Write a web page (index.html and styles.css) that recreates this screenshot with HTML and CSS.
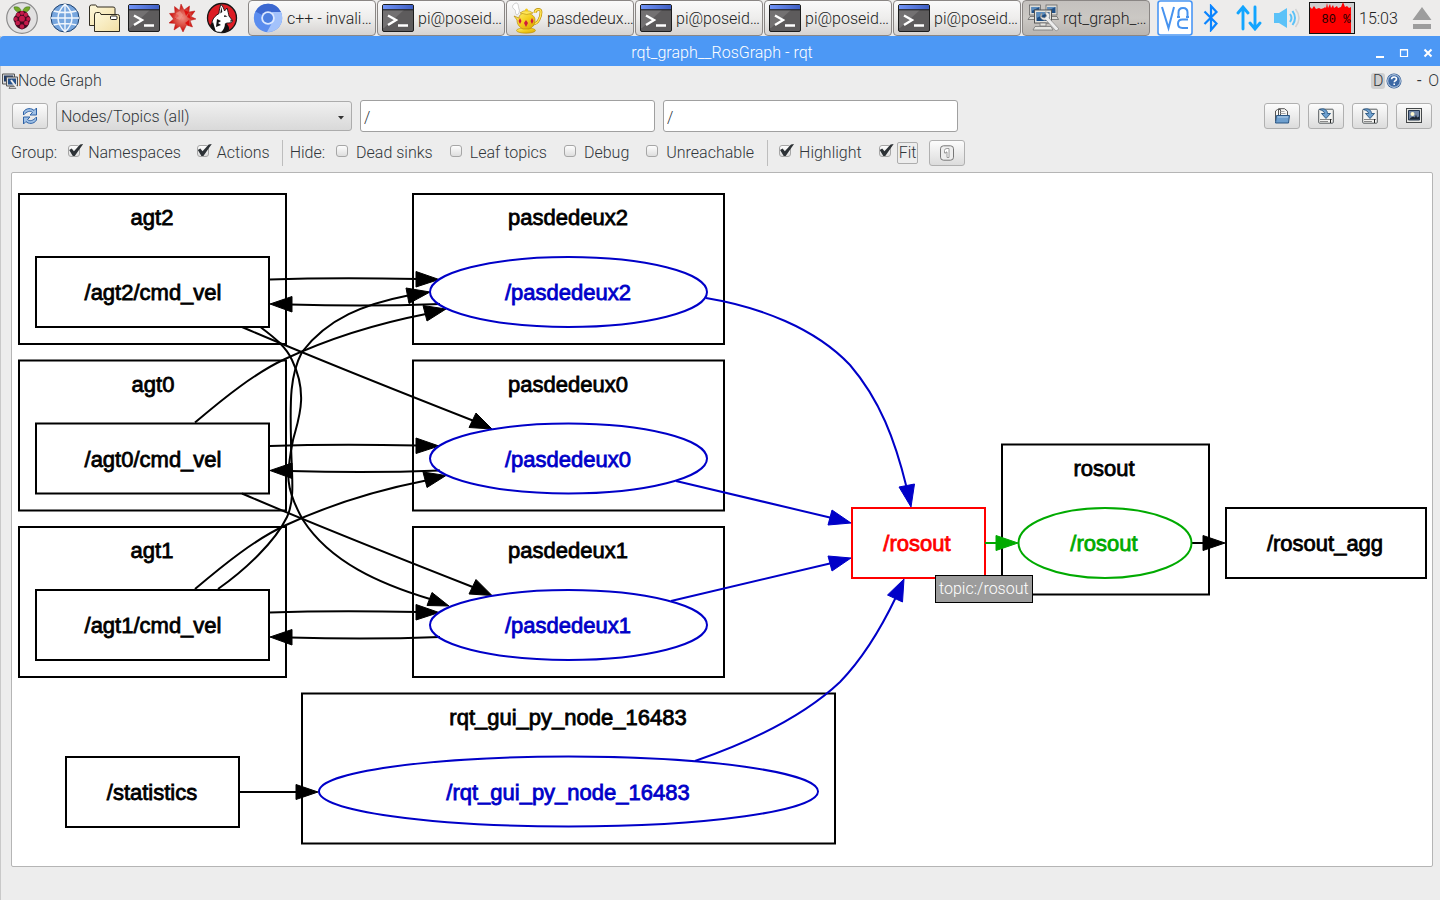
FILE: index.html
```html
<!DOCTYPE html>
<html lang="en">
<head>
<meta charset="utf-8">
<title>rqt_graph__RosGraph - rqt</title>
<link rel="stylesheet" href="styles.css">
</head>
<body>
<svg class="defs" aria-hidden="true">
  <defs>
    <linearGradient id="termBar" x1="0" x2="1" y1="0" y2="0"><stop offset="0" stop-color="#6f92f5"/><stop offset="1" stop-color="#3f5fc4"/></linearGradient>
    <linearGradient id="folderFill" x1="0" x2="1" y1="0" y2="1"><stop offset="0" stop-color="#fdf8dc"/><stop offset="1" stop-color="#f3dfa4"/></linearGradient>
    <linearGradient id="gold" x1="0" x2="1" y1="0" y2="1"><stop offset="0" stop-color="#fff27a"/><stop offset=".5" stop-color="#f5cf1e"/><stop offset="1" stop-color="#d9a400"/></linearGradient>
    <radialGradient id="starFill"><stop offset="0" stop-color="#ee8d80"/><stop offset=".6" stop-color="#d8453b"/><stop offset="1" stop-color="#c00"/></radialGradient>
    <symbol id="terminal" viewBox="0 0 32 28">
      <rect x=".5" y=".5" width="31" height="27" rx="1.5" fill="#5d5b5c" stroke="#1c1c1c"/>
      <path d="M1 6h21L2 24H1z" fill="#737172"/>
      <rect x="1" y="1" width="30" height="4.5" fill="url(#termBar)"/>
      <path d="M1 5.8h30" stroke="#1c1c1c"/>
      <path d="M6 11.500l8 4.500-8 5M16 21.500h10" fill="none" stroke="#fff" stroke-width="2.400"/>
    </symbol>
    <symbol id="monitors" viewBox="0 0 32 28">
      <g stroke="#666" stroke-width=".8" fill="#dcdcd8">
        <rect x="2.500" y="1" width="11" height="10"/><rect x="19" y="1" width="11" height="10"/>
        <path d="M3 12.500h6v3H1zM24 12.500h6l1.500 3H24z"/>
      </g>
      <path d="M4.500 3h8v6h-8zM20.500 3h8v6h-8z" fill="#1f4f86"/><path d="M4.500 3h8l-8 4zM20.500 3h8l-8 4z" fill="#5c8dbe"/>
      <rect x="7.500" y="6" width="17" height="13" fill="#e4e4df" stroke="#555"/>
      <path d="M9.500 8h13v9h-13z" fill="#1c4b80"/><path d="M9.500 8h13l-13 6z" fill="#5c8dbe"/>
      <path d="M13 19h6v3h-6zM8 22.500h16l2 3.500H6z" fill="#e6e6e2" stroke="#777" stroke-width=".8"/>
      <path d="M15 9c-4 4 0 8 4 7l10 11 3-2-10-11c2-4-1-6-4-6l1.500 4-2 2-3-1z" fill="#ececec" stroke="#888" stroke-width=".7"/>
    </symbol>
    <symbol id="save" viewBox="0 0 16 16">
      <rect x=".7" y="1.200" width="14.600" height="14" rx="1" fill="#f3f3f1" stroke="#555b5e"/>
      <path d="M2 11.500h12M2 13.500h8" stroke="#888"/><path d="M12.500 11v4" stroke="#222"/>
      <path d="M1.500 1.500c5-2 8 1 8 4h3L8 10.500 3.500 5.500h3c0-2-2-3-5-4z" fill="#6ea0cf" stroke="#28537e" stroke-width=".9"/>
    </symbol>
  </defs>
</svg>

<header class="taskbar">
  <nav class="launchers" aria-label="Launchers">
    <button class="launch" aria-label="Menu"><svg width="32" height="32" viewBox="0 0 32 32">
      <circle cx="16" cy="16" r="15.300" fill="#e2e1e1" stroke="#8c8c8c" stroke-width="1.200"/>
      <path d="M15.500 10C11 11 8 8 8 5c4-1 7 1 7.500 5zM16.500 10c4.500 1 7.500-2 7.500-5-4-1-7 1-7.500 5z" fill="#75a928" stroke="#356b16" stroke-width=".5"/>
      <path d="M16 9c-4 0-6 2-6.500 4.500C7 15 7 18.500 8.500 20c.5 4 3.500 6.500 7.500 7.500 4-1 7-3.500 7.500-7.500 1.500-1.500 1.500-5-1-6.500C22 11 20 9 16 9z" fill="#450a20"/>
      <g fill="#c51a4a"><circle cx="16" cy="11" r="2"/><circle cx="12.200" cy="12.800" r="2.100"/><circle cx="19.800" cy="12.800" r="2.100"/><circle cx="16" cy="16.700" r="2.900"/><circle cx="9.800" cy="17" r="1.900"/><circle cx="22.200" cy="17" r="1.900"/><circle cx="11.700" cy="21" r="2.300"/><circle cx="20.300" cy="21" r="2.300"/><circle cx="16" cy="24.500" r="2.200"/></g>
    </svg></button>
    <button class="launch" aria-label="Web browser"><svg width="30" height="30" viewBox="0 0 30 30">
      <circle cx="15" cy="15" r="14" fill="#77a6de" stroke="#1c3f6c"/>
      <path d="M15 1v28M1 15h28M3.500 8q11.500 3 23 0M3.500 22q11.500-3 23 0M15 1q-14 14 0 28q14-14 0-28" fill="none" stroke="#f1f6fc" stroke-width="1.400"/>
    </svg></button>
    <button class="launch" aria-label="File manager"><svg width="34" height="30" viewBox="0 0 34 30">
      <g fill="url(#folderFill)" stroke="#302c20"><path d="M2.500 22.500V4q0-2 2-2h4q1 0 1.500 2h16q2 0 2 1.500v17z"/><path d="M7.500 28.500V12q0-2.500 2-2.500h3q1 0 1.500 2h16.500q2 0 2 2v15z"/></g>
      <rect x="23.500" y="13" width="6.500" height="3.500" rx="1" fill="#fff" stroke="#222"/>
    </svg></button>
    <button class="launch" aria-label="Terminal"><svg width="32" height="28"><use href="#terminal"/></svg></button>
    <button class="launch" aria-label="Mathematica"><svg width="30" height="30" viewBox="0 0 30 30">
      <path d="M14 1l3 6 5.500-4-.5 6 6-1-4 5.500 5 2.500-6 1.500 2.500 6.500-6-2-3.500 7-3-6-6 4 1.500-6.500L2 20l4.500-4-4-5.500L8 10 7.500 3.500l5 4z" fill="url(#starFill)" stroke="#b91d18" stroke-width=".5"/>
      <path d="M17 7l5 2-3 4zM22 10l2 6-4-2zM22 17v6l-4-3zM9 10l-1 6 4-3z" fill="#d00" opacity=".8"/><path d="M9 10l4-2 3 4-3 5-5-2z" fill="#f0a296" opacity=".55"/>
    </svg></button>
    <button class="launch" aria-label="Wolfram"><svg width="32" height="32" viewBox="0 0 32 32">
      <circle cx="16" cy="16" r="14.500" fill="#dc1c24" stroke="#161616" stroke-width="1.300"/>
      <path d="M7 28C4 20 7 15 13 11.500 13 8 14 5 15 2.500c2 2 3 4.500 3.500 6.500L21 6c1 3 1.500 6 2 8l3.500 4.500c0 2.500-3 2.500-6 2.500 1 4-1 6-3 9-4 1-8 0-10.500-2z" fill="#fff" stroke="#111" stroke-width=".9"/>
      <path d="M7 20l-3 3q2 5 6 7zM19 21q5 3 4 7-3 2.500-8 2.500 4-4 4-9.500zM15.300 5l1 5-2 1.500zM18.500 13l3 1.500-3.500.5zM24.500 17.500l2 1.200-2 1.300zM11 17l4 2-3 2 3 2-5 2z" fill="#111"/>
    </svg></button>
  </nav>
  <nav class="tasks" aria-label="Open windows">
    <button class="task"><svg width="30" height="30" viewBox="0 0 30 30"><circle cx="15" cy="15" r="14.200" fill="#5b8def"/><path d="M15 15L2.500 8.500A14.200 14.200 0 0 1 28 9H15z" fill="#3c68d0"/><path d="M28 9a14.200 14.200 0 0 1-14 20l6-11-1-9z" fill="#a3c2fb"/><circle cx="15" cy="15" r="6.800" fill="#dce8ff"/><circle cx="15" cy="15" r="5" fill="#4d7fe0"/></svg><span>c++ - invali…</span></button>
    <button class="task"><svg width="32" height="28"><use href="#terminal"/></svg><span>pi@poseid…</span></button>
    <button class="task"><svg width="32" height="32" viewBox="0 0 32 32">
      <path d="M6 13C3 11 6 9 3 7S2 2 5 1c3 0 2 4 3 6s0 5-2 6z" fill="#fff" stroke="#bbb" stroke-width=".7"/>
      <path d="M24 11c0-4 6-5 6-1 0 5-3 12-8 12" fill="none" stroke="#b98c08" stroke-width="2.800"/><path d="M24 11c0-4 6-5 6-1 0 5-3 12-8 12" fill="none" stroke="#ffe355" stroke-width="1.500"/>
      <ellipse cx="15" cy="28.500" rx="9.500" ry="2.700" fill="url(#gold)" stroke="#b68a09" stroke-width=".6"/>
      <path d="M3 14l5 2c0-4 4-5 7-5s9 2 9 7c0 5-3 8-6 9h-6c-4-2-6-5-6-9z" fill="url(#gold)" stroke="#b68a09" stroke-width=".7"/>
      <path d="M9 11q6-5 13 0-6 3-13 0z" fill="#ffe556" stroke="#b68a09" stroke-width=".6"/><circle cx="15.500" cy="8" r="1.500" fill="#f3c919"/>
      <path d="M9 16l1.500 3L9 22l-1.500-3zM15 18l2 3-2 4-2-4zM21 16l1.500 3-1.500 3-1.500-3z" fill="#d0193c"/>
    </svg><span>pasdedeux…</span></button>
    <button class="task"><svg width="32" height="28"><use href="#terminal"/></svg><span>pi@poseid…</span></button>
    <button class="task"><svg width="32" height="28"><use href="#terminal"/></svg><span>pi@poseid…</span></button>
    <button class="task"><svg width="32" height="28"><use href="#terminal"/></svg><span>pi@poseid…</span></button>
    <button class="task active"><svg width="32" height="28"><use href="#monitors"/></svg><span>rqt_graph_…</span></button>
  </nav>
  <div class="tray">
    <svg width="36" height="36" viewBox="0 0 36 36"><rect x="1" y="1" width="34" height="34" rx="2.500" fill="#fff" stroke="#4a97f5" stroke-width="1.600"/><path d="M5 7l6.500 21L17 7M21.500 17v-4.500q0-4.500 4.500-4.500t4.500 4.500V17M31 19.500h-5.500q-4.500 0-4.500 4.200t4.500 4.200H31M20 17h3M29 17h3" fill="none" stroke="#4793ef" stroke-width="2"/></svg>
    <svg width="16" height="28" viewBox="0 0 16 28"><path d="M1.500 7.500l12 12L8 26V2l5.500 6-12 12" fill="none" stroke="#0a84ff" stroke-width="2.200"/></svg>
    <svg width="26" height="26" viewBox="0 0 26 26"><path d="M7 24V3M2 8l5-6 5 6M19 2v21M14 18l5 6 5-6" fill="none" stroke="#12a5ff" stroke-width="2.900" stroke-linecap="round"/></svg>
    <svg width="28" height="22" viewBox="0 0 28 22"><path d="M1 6h5l8-5v20l-8-5H1z" fill="#5bc2f8"/><path d="M17 7q3 4 0 8M19.500 4q5 7 0 14" fill="none" stroke="#5bc2f8" stroke-width="2"/><path d="M22.500 2q7 9 0 18" fill="none" stroke="#d1d3d4" stroke-width="1.500"/></svg>
    <svg class="cpu" width="46" height="32" viewBox="0 0 46 32"><rect x=".5" y=".5" width="45" height="31" fill="#cfcfcf" stroke="#111"/><path d="M1 31V5l2 2 2-3 2 3 3-1 2 1 3-1 1-1 1 1 1-5 1 5 2-4 1 4 2-3 1 3 3-2 1 2 3-1 2-5 2 5 2-1 2 2 2-1v26z" fill="#f00"/><text x="27" y="21">80 %</text></svg>
    <time>15:03</time>
    <svg width="20" height="22" viewBox="0 0 20 22"><path d="M10 0l9.500 13H.5zM1 17h18v5H1z" fill="#9d9d9d"/></svg>
  </div>
</header>

<main class="window">
  <div class="titlebar">
    <h1>rqt_graph__RosGraph - rqt</h1>
    <div class="wincontrols">
      <button aria-label="Minimize"><svg width="10" height="10" viewBox="0 0 10 10"><path d="M1 9h8" stroke="#fff" stroke-width="2"/></svg></button>
      <button aria-label="Maximize"><svg width="10" height="10" viewBox="0 0 10 10"><path d="M1.500 1.500h7v7h-7zM1 2h8" fill="none" stroke="#fff" stroke-width="1.200"/></svg></button>
      <button aria-label="Close"><svg width="10" height="10" viewBox="0 0 10 10"><path d="M1.500 1.500l7 7M8.500 1.500l-7 7" stroke="#fff" stroke-width="2"/></svg></button>
    </div>
  </div>

  <div class="dockbar">
    <svg width="16" height="16" viewBox="0 0 16 16"><path d="M.5 1h12v10H.5z" fill="#ddd" stroke="#555"/><path d="M2 2.500h9v6H2z" fill="#213b67"/><path d="M4.500 4h11v9h-11z" fill="#ddd" stroke="#555"/><path d="M6 5.500h8v6H6z" fill="#26518a"/><path d="M8 13.500h5l1 2H7z" fill="#ccc" stroke="#555" stroke-width=".7"/><path d="M9 7l6 8" stroke="#eee" stroke-width="2"/></svg>
    <h2>Node Graph</h2>
    <div class="dockactions">
      <button class="dockd">D</button>
      <button aria-label="Help"><svg width="16" height="16" viewBox="0 0 16 16"><circle cx="8" cy="8" r="7.500" fill="#2f5a94"/><circle cx="8" cy="8" r="6.300" fill="#3b68a5" stroke="#dbe6f4" stroke-width=".9"/><path d="M5.600 6.300q0-2.300 2.500-2.300 2.400 0 2.400 2 0 1.200-1.200 1.800-1 .5-1 1.400M8.200 10.500v1.600" fill="none" stroke="#fff" stroke-width="1.600"/></svg></button>
      <button class="dash">-</button>
      <button>O</button>
    </div>
  </div>

  <div class="filters">
    <button class="tool" aria-label="Refresh"><svg width="16" height="16" viewBox="0 0 16 16"><path d="M1.500 7V4C4-.5 10 0 12 2.500L14.500 0v7H8l2.500-2.500C8.500 2.500 5 3 1.500 7zM14.500 9v3c-2.500 4.500-8.500 4-10.500 1.500L1.500 16V9H8l-2.500 2.500c2 2 5.500 1.500 9-2.500z" fill="#9fc0e5" stroke="#2e62a6"/></svg></button>
    <div class="combo">
      <select aria-label="Graph type"><option>Nodes/Topics (all)</option><option>Nodes/Topics (active)</option><option>Nodes only</option></select>
      <svg width="6" height="4" viewBox="0 0 6 4"><path d="M0 0h6L3 3.500z" fill="#333"/></svg>
    </div>
    <input class="field" type="text" value="/" aria-label="Node filter">
    <input class="field" type="text" value="/" aria-label="Topic filter">
    <div class="fileactions">
      <button class="tool" aria-label="Load"><svg width="16" height="16" viewBox="0 0 16 16"><path d="M1.500 13V3l2-1.500h3V8M4.500 8V.7h6l3 2.500V8" fill="#f7f7f5" stroke="#555"/><path d="M6.500 3.500h4M6.500 5.500h5" stroke="#aaa"/><path d="M2.500 7.500h13l-1 7.500h-13z" fill="#6e9fce" stroke="#295583"/><path d="M3.500 9h10.500" stroke="#b6d0e9"/></svg></button>
      <button class="tool" aria-label="Save DOT"><svg width="16" height="16"><use href="#save"/></svg></button>
      <button class="tool" aria-label="Save SVG"><svg width="16" height="16"><use href="#save"/></svg></button>
      <button class="tool" aria-label="Save image"><svg width="16" height="16" viewBox="0 0 16 16"><rect x=".5" y=".5" width="15" height="14" fill="#e8e8e4" stroke="#45484a"/><path d="M2.500 2.500h11v9.500h-11z" fill="#7286a6" stroke="#25364f"/><circle cx="6.500" cy="6" r="2" fill="#fff7cf"/><path d="M3 11.500q3-4 6-2l1-3 1 3 2-1v3z" fill="#1c2634"/></svg></button>
    </div>
  </div>

  <div class="options">
    <span class="grouplabel">Group:</span>
    <label class="check"><input type="checkbox" checked><span>Namespaces</span></label>
    <label class="check"><input type="checkbox" checked><span>Actions</span></label>
    <i class="sep"></i>
    <span class="grouplabel">Hide:</span>
    <label class="check"><input type="checkbox"><span>Dead sinks</span></label>
    <label class="check"><input type="checkbox"><span>Leaf topics</span></label>
    <label class="check"><input type="checkbox"><span>Debug</span></label>
    <label class="check"><input type="checkbox"><span>Unreachable</span></label>
    <i class="sep"></i>
    <label class="check"><input type="checkbox" checked><span>Highlight</span></label>
    <label class="check focus"><input type="checkbox" checked><span>Fit</span></label>
    <button class="tool" aria-label="Fit in view"><svg width="16" height="16" viewBox="0 0 16 16"><rect x="1.500" y=".8" width="13" height="14.400" rx="3" fill="#eee" stroke="#777"/><path d="M5.500 5.500q0-2 2.500-2h2v9H8V7H7v1H5.500z" fill="#fff" stroke="#888" stroke-width=".8"/></svg></button>
  </div>

  <section class="canvas" aria-label="Graph">
    <svg class="graph" viewBox="12 173 1420 693">
      <defs>
        <g id="pair"><path d="M270 279.500C315 278 365 278 418 279"/><path class="head" d="M439 279.500L416 271.500V287z"/><path d="M440 304C390 306 340 306 290 304.500"/><path class="head" d="M270 304L292 296.500V312z"/></g>
        <g id="down"><path d="M242 327C300 352 400 392 474 421"/><path class="head" d="M492 429L469 427.500 476 413z"/></g>
        <g id="up"><path d="M195 422.500C225 397 255 373 285 359C330 338 380 323 426 314"/><path class="head" d="M446 309L427 321 423 305.500z"/></g>
      </defs>
      <g class="shape">
        <rect x="19" y="194" width="267" height="150"/><rect x="19" y="360.500" width="267" height="150"/><rect x="19" y="527" width="267" height="150"/>
        <rect x="413" y="194" width="311" height="150"/><rect x="413" y="360.500" width="311" height="150"/><rect x="413" y="527" width="311" height="150"/>
        <rect x="302" y="693.500" width="533" height="150"/><rect x="1002" y="444.500" width="207" height="150"/>
        <rect x="36" y="257" width="233" height="70"/><rect x="36" y="423.500" width="233" height="70"/><rect x="36" y="590" width="233" height="70"/>
        <rect x="66" y="757" width="173" height="70"/><rect x="1226" y="508" width="200" height="70"/><rect class="red" x="852" y="508" width="133" height="70"/>
      </g>
      <g class="edge">
        <use href="#pair"/><use href="#pair" y="166.500"/><use href="#pair" y="333"/>
        <use href="#down"/><use href="#down" y="166.500"/>
        <use href="#up"/><use href="#up" y="166.500"/>
        <path d="M261 327.500C275 338 286 347 292 360C309 395 298 420 293 440C286 475 285 488 303 520C330 562 380 584 430 599"/><path class="head" d="M449 606L427 605.500 432 592.500z"/>
        <path d="M218 589C245 570 275 542 287 517C296 498 291 470 291 440C290 400 290 375 302 352C328 318 365 304 408 295.500"/><path class="head" d="M430 292L409 303.500 406 288z"/>
        <path d="M239 792H298M1192 543H1206"/><path class="head" d="M318 792L296 784.500V799.500zM1225 543L1203 535.500V550.500z"/>
      </g>
      <g class="shape blue">
        <ellipse cx="568.500" cy="292" rx="138.500" ry="35"/><ellipse cx="568.500" cy="458.500" rx="138.500" ry="35"/><ellipse cx="568.500" cy="625" rx="138.500" ry="35"/><ellipse cx="568.500" cy="791.500" rx="249.500" ry="35"/>
      </g>
      <g class="edge blue">
        <path d="M706 298C760 307 815 328 850 365C880 400 895 440 906.500 487"/><path class="head" d="M911 507L899 487 914.500 484z"/>
        <path d="M676 481L832 518"/><path class="head" d="M851 523L828 525 832 510z"/>
        <path d="M671 601L832 563"/><path class="head" d="M851 558L832 571 828 556z"/>
        <path d="M695 761C750 742 805 715 840 682C868 653 885 620 896 597"/><path class="head" d="M904 579L887.500 595 902.500 602z"/>
      </g>
      <ellipse class="shape green" cx="1105" cy="543" rx="86.500" ry="35"/>
      <g class="edge green"><path d="M985 543H998"/><path class="head" d="M1018 543L996 535.500V550.500z"/></g>
      <g class="names">
        <text x="152" y="225">agt2</text><text x="153" y="392">agt0</text><text x="152" y="558">agt1</text>
        <text x="153" y="300">/agt2/cmd_vel</text><text x="153" y="467">/agt0/cmd_vel</text><text x="153" y="633">/agt1/cmd_vel</text>
        <text x="568" y="225">pasdedeux2</text><text x="568" y="392">pasdedeux0</text><text x="568" y="558">pasdedeux1</text>
        <text class="blue" x="568" y="300">/pasdedeux2</text><text class="blue" x="568" y="467">/pasdedeux0</text><text class="blue" x="568" y="633">/pasdedeux1</text>
        <text x="568" y="725">rqt_gui_py_node_16483</text><text class="blue" x="568" y="800">/rqt_gui_py_node_16483</text>
        <text x="152" y="800">/statistics</text>
        <text class="red" x="917" y="551">/rosout</text><text x="1104" y="476">rosout</text><text class="green" x="1104" y="551">/rosout</text><text x="1325" y="551">/rosout_agg</text>
      </g>
    </svg>
    <div class="tooltip" role="tooltip">topic:/rosout</div>
  </section>
</main>
</body>
</html>
```
FILE: styles.css
```css
* { box-sizing: border-box; }
body {
  margin: 0;
  min-height: 100vh;
  display: flex;
  flex-direction: column;
  background: #ededed;
  color: #30363a;
  font: 300 16px/20px Roboto, "Liberation Sans", sans-serif;
}
h1, h2 { margin: 0; font: inherit; }
button { margin: 0; padding: 0; border: 0; background: none; color: inherit; font: inherit; }
svg { display: block; flex: none; }
.defs { position: absolute; width: 0; height: 0; }

.taskbar { display: flex; height: 36px; background: #edeceb; color: #222; }
.launchers { display: flex; align-items: center; gap: 7px; padding: 0 10px 0 6px; }
.launchers .launch:first-child { margin-right: 5px; }
.launchers .launch:last-child { margin-left: 2px; }
.tasks { display: flex; flex: 1; gap: 1px; min-width: 0; }
.task {
  flex: 1 1 0;
  min-width: 0;
  display: flex;
  align-items: center;
  gap: 4px;
  padding: 0 4px;
  border: 1px solid #8a8684;
  border-radius: 4px;
  background: linear-gradient(#fafafa, #eeedec 50%, #d6d3d1);
  white-space: nowrap;
  overflow: hidden;
}
.task span, .tray time { padding-top: 2px; }
.task.active { background: linear-gradient(#c4c1be, #cbc8c4 50%, #b9b5b1); }
.tray { display: flex; align-items: center; padding: 0 8px 0 7px; }
.tray svg:nth-child(2) { margin-left: 10px; }
.tray svg:nth-child(3) { margin-left: 17px; }
.tray svg:nth-child(4) { margin-left: 11px; }
.tray .cpu { margin-left: 8px; }
.cpu text { font: 400 12px "Liberation Mono", monospace; text-anchor: middle; fill: #200; }
.tray time { width: 48px; margin: 0 5px 0 4px; }

.window { flex: 1; display: flex; flex-direction: column; border-left: 1px solid #c9c9c9; }
.titlebar {
  display: flex;
  align-items: center;
  height: 30px;
  margin-left: -1px;
  padding: 3px 7px 0 69px;
  border-radius: 4px 0 0 0;
  background: #4c98f5;
  color: #fff;
}
.titlebar h1 { flex: 1; text-align: center; }
.wincontrols { display: flex; gap: 14px; }
.dockbar { display: flex; align-items: center; height: 28px; padding: 1px 1px 0; }
.dockactions { display: flex; align-items: center; gap: 1px; margin-left: auto; }
.dockd { width: 14px; line-height: 16px; border-radius: 3px; background: #cfcfcf; }
.dash { width: 24px; padding-left: 8px; font-weight: 400; }

.filters { display: flex; align-items: center; gap: 8px; height: 44px; padding: 0 8px 0 11px; }
.tool {
  flex: none;
  width: 36px;
  height: 26px;
  display: grid;
  place-items: center;
  border: 1px solid #b0b0b0;
  border-radius: 3px;
  background: linear-gradient(#fcfcfc, #dcdcdc);
}
.combo { position: relative; flex: 0 1 296px; height: 30px; }
.combo select {
  width: 100%;
  height: 100%;
  padding: 2px 4px 0;
  appearance: none;
  border: 1px solid #acacac;
  border-radius: 3px;
  background: linear-gradient(#f0f0f0, #d9d9d9);
  color: inherit;
  font: inherit;
}
.combo svg { position: absolute; right: 8px; top: 15px; pointer-events: none; }
.field {
  flex: 0 1 295px;
  min-width: 0;
  height: 32px;
  padding: 2px 3px 0;
  border: 1px solid #a0a0a0;
  border-radius: 3px;
  background: #fff;
  color: inherit;
  font: inherit;
}
.fileactions { display: flex; gap: 8px; margin-left: auto; }

.options { display: flex; align-items: center; height: 28px; margin-bottom: 6px; padding: 1px 0 0 10px; }
.grouplabel { margin-right: 11px; }
.check { display: flex; align-items: center; gap: 8px; margin-right: 16px; }
.check input {
  position: relative;
  width: 12px;
  height: 12px;
  margin: 0 0 3px;
  appearance: none;
  border: 1px solid #a6a6a6;
  border-radius: 3px;
  background: linear-gradient(#fdfdfd, #dedede);
}
.check input:checked::before {
  content: "";
  position: absolute;
  left: 0;
  top: -2px;
  width: 14px;
  height: 12px;
  background: #2d3236;
  clip-path: polygon(0 50%, 18% 38%, 34% 60%, 78% 4%, 100% 0, 40% 100%, 26% 100%);
}
.grouplabel ~ .grouplabel ~ .check { margin-right: 17px; }
.grouplabel ~ .grouplabel ~ .check.focus { gap: 6px; margin-right: 11px; }
.check.focus span { padding: 0 1px; border: 1px solid #adadad; border-radius: 2px; }
.sep { width: 1px; height: 26px; margin: 0 7px 0 -4px; background: #bdbdbd; }
.sep + .check { margin-left: 4px; }

.canvas {
  position: relative;
  flex: 1;
  min-height: 0;
  margin: 0 7px 33px 10px;
  border: 1px solid #b5b5b5;
  border-radius: 2px;
  background: #fff;
}
.graph { width: 100%; height: 100%; }
.shape { fill: none; stroke: #000; stroke-width: 2; }
.edge { fill: none; stroke: #000; stroke-width: 2; }
.head { fill: #000; stroke-width: 1; }
.names { font: 400 22px "Liberation Sans", Arial, sans-serif; text-anchor: middle; fill: #000; stroke: #000; stroke-width: .8; }
.shape.blue, .shape .blue, .edge.blue { stroke: #0000c8; }
.edge.blue .head { fill: #0000c8; }
.shape.green, .edge.green { stroke: #00aa00; }
.edge.green .head { fill: #00aa00; }
.shape .red { stroke: #f00; }
.names .blue { fill: #0000c8; stroke: #0000c8; }
.names .green { fill: #00aa00; stroke: #00aa00; }
.names .red { fill: #f00; stroke: #f00; }
.tooltip {
  position: absolute;
  left: 65%;
  top: 58%;
  padding: 3px;
  border: 1px solid #000;
  background: #9c9c9c;
  color: #fff;
  white-space: nowrap;
}
```
